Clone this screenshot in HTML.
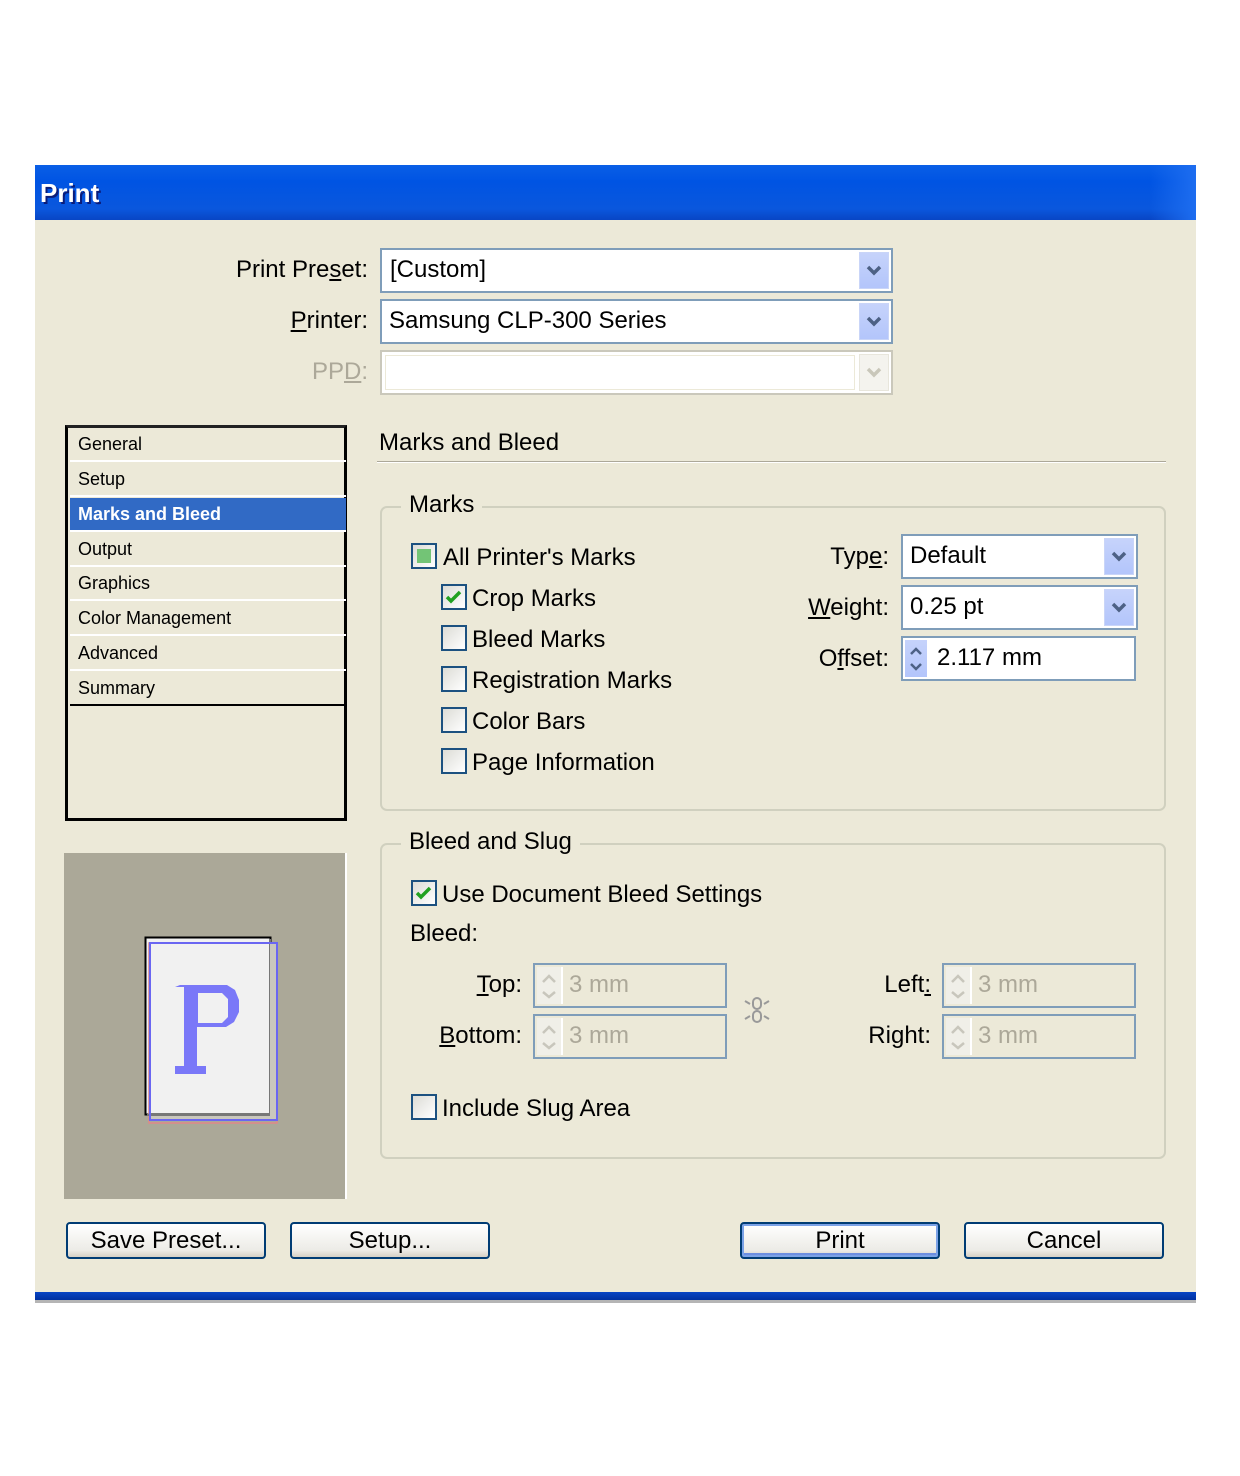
<!DOCTYPE html>
<html><head><meta charset="utf-8"><style>
*{margin:0;padding:0;box-sizing:border-box}
body{width:1240px;height:1476px;background:#fff;position:relative;overflow:hidden;font-family:"Liberation Sans",sans-serif;color:#000}
.a{position:absolute}
.t{position:absolute;font-size:24px;line-height:30px;white-space:nowrap}
.r{text-align:right}
.box{position:absolute;background:#fff;border:2px solid #7f9db9}
.dd{position:absolute;top:2px;right:2px;width:30px;background:linear-gradient(#c6d3fb,#b3c5fb);border:1px solid #c9d5f8}
.dd svg{position:absolute;left:6px}
.cb{position:absolute;width:26px;height:26px;border:2px solid #1c5180;background:linear-gradient(135deg,#dcdcd6,#fff)}
.grp{position:absolute;border:2px solid #d0d0bf;border-radius:7px}
.leg{position:absolute;background:#ece9d8;padding:0 8px;font-size:24px;line-height:30px}
.li{position:absolute;left:2px;width:276px;height:34px;border-bottom:2px solid #fff;font-size:18px;line-height:32px;padding-left:8px}
.btn{position:absolute;top:1222px;height:37px;width:200px;border:2px solid #003c74;border-radius:4px;background:linear-gradient(#fff,#ecebe6 80%,#d6d0c5);text-align:center;font-size:24px;line-height:33px}
.spin{position:absolute;border:2px solid #7f9db9;background:#ece9d8}
.sp{position:absolute;left:2px;top:2px;width:26px;bottom:2px;background:#f0efe8;border-right:2px solid #fff}
.g{color:#aca899}
</style></head><body>
<!-- dialog -->
<div class="a" style="left:35px;top:165px;width:1161px;height:1138px;background:#ece9d8"></div>
<div class="a" style="left:35px;top:165px;width:1161px;height:55px;background:linear-gradient(#0a5fe6,#0054e3 30%,#0a57dd 80%,#0845c4);"></div>
<div class="a" style="left:1150px;top:165px;width:46px;height:55px;background:linear-gradient(90deg,rgba(0,84,227,0),#1d6df0)"></div>
<div class="t" style="left:40px;top:178px;color:#fff;font-weight:bold;font-size:26px;text-shadow:2px 2px 0 #0a1c7a">Print</div>
<div class="a" style="left:35px;top:1292px;width:1161px;height:8px;background:linear-gradient(#0845c4,#0030a0)"></div>
<div class="a" style="left:35px;top:1300px;width:1161px;height:3px;background:#b5b5b5"></div>

<!-- top fields -->
<div class="t r" style="left:150px;width:218px;top:255px">Print Pre<u>s</u>et:</div>
<div class="t r" style="left:150px;width:218px;top:306px"><u>P</u>rinter:</div>
<div class="t r g" style="left:150px;width:218px;top:357px">PP<u>D</u>:</div>
<div class="box" style="left:380px;top:248px;width:513px;height:45px"><div class="t" style="left:8px;top:5px">[Custom]</div><div class="dd" style="height:37px"><svg width="16" height="12" style="top:12px"><path d="M2 2l6 6 6-6" stroke="#4d6185" stroke-width="3.5" fill="none"/></svg></div></div>
<div class="box" style="left:380px;top:299px;width:513px;height:45px"><div class="t" style="left:7px;top:5px">Samsung CLP-300 Series</div><div class="dd" style="height:37px"><svg width="16" height="12" style="top:12px"><path d="M2 2l6 6 6-6" stroke="#4d6185" stroke-width="3.5" fill="none"/></svg></div></div>
<div class="box" style="left:380px;top:350px;width:513px;height:45px;border-color:#cac8bb"><div class="a" style="left:3px;top:3px;width:470px;height:35px;border:1px solid #ece9d8"></div><div class="dd" style="height:37px;background:#f4f3ee;border-color:#e8e6dc"><svg width="16" height="12" style="top:12px"><path d="M2 2l6 6 6-6" stroke="#c9c7ba" stroke-width="3.5" fill="none"/></svg></div></div>

<!-- list -->
<div class="a" style="left:65px;top:425px;width:282px;height:396px;border:3px solid #000;border-top-color:#222;background:#ece9d8">
<div class="li" style="top:0">General</div>
<div class="li" style="top:35px">Setup</div>
<div class="li" style="top:70px;background:#316ac5;color:#fff;font-weight:bold">Marks and Bleed</div>
<div class="li" style="top:105px">Output</div>
<div class="li" style="top:139px">Graphics</div>
<div class="li" style="top:174px">Color Management</div>
<div class="li" style="top:209px">Advanced</div>
<div class="li" style="top:244px;border-bottom:2px solid #000">Summary</div>
</div>

<!-- preview -->
<div class="a" style="left:64px;top:853px;width:283px;height:346px;background:#aba898;border-right:2px solid #fff"></div>
<svg class="a" style="left:140px;top:935px" width="145" height="195">
<rect x="5.5" y="2.5" width="125" height="177" fill="#f1f1f1" stroke="#000" stroke-width="2"/>
<rect x="9" y="8" width="128" height="180" fill="none" stroke="#e08888" stroke-width="1.5"/>
<line x1="130" y1="4" x2="130" y2="180" stroke="#777" stroke-width="2"/><line x1="7" y1="180" x2="131" y2="180" stroke="#777" stroke-width="2"/>
<rect x="130" y="8" width="6" height="176" fill="#c9c7bd"/><rect x="10" y="181" width="124" height="4" fill="#c9c7bd"/>
<rect x="10" y="8" width="127" height="177" fill="none" stroke="#6a66f2" stroke-width="2"/>
<path d="M40 50h47l8 5 4 10v12l-5 10-8 5h-29v39h9v8h-31v-8h9v-79h-9z M58 58v30h24l6-6v-18l-6-6z" fill="#7a78f8" fill-rule="evenodd"/>
</svg>

<!-- Marks and Bleed heading -->
<div class="t" style="left:379px;top:428px">Marks and Bleed</div>
<div class="a" style="left:377px;top:461px;width:789px;height:2px;background:#aca899;border-bottom:1px solid #fff"></div>

<!-- Marks group -->
<div class="grp" style="left:380px;top:506px;width:786px;height:305px"></div>
<div class="leg" style="left:401px;top:490px">Marks</div>
<div class="cb" style="left:411px;top:543px"><div class="a" style="left:4px;top:4px;width:14px;height:14px;background:#73c476"></div></div>
<div class="t" style="left:443px;top:543px">All Printer's Marks</div>
<div class="cb" style="left:441px;top:584px"><svg class="a" style="left:2px;top:3px" width="18" height="16"><path d="M2 8l4 4 9-9" stroke="#21a121" stroke-width="3.5" fill="none"/></svg></div>
<div class="t" style="left:472px;top:584px">Crop Marks</div>
<div class="cb" style="left:441px;top:625px"></div><div class="t" style="left:472px;top:625px">Bleed Marks</div>
<div class="cb" style="left:441px;top:666px"></div><div class="t" style="left:472px;top:666px">Registration Marks</div>
<div class="cb" style="left:441px;top:707px"></div><div class="t" style="left:472px;top:707px">Color Bars</div>
<div class="cb" style="left:441px;top:748px"></div><div class="t" style="left:472px;top:748px">Page Information</div>

<div class="t r" style="left:760px;width:129px;top:542px">Typ<u>e</u>:</div>
<div class="t r" style="left:760px;width:129px;top:593px"><u>W</u>eight:</div>
<div class="t r" style="left:760px;width:129px;top:644px">O<u>f</u>fset:</div>
<div class="box" style="left:901px;top:534px;width:237px;height:45px"><div class="t" style="left:7px;top:5px">Default</div><div class="dd" style="height:37px"><svg width="16" height="12" style="top:12px"><path d="M2 2l6 6 6-6" stroke="#4d6185" stroke-width="3.5" fill="none"/></svg></div></div>
<div class="box" style="left:901px;top:585px;width:237px;height:45px"><div class="t" style="left:7px;top:5px">0.25 pt</div><div class="dd" style="height:37px"><svg width="16" height="12" style="top:12px"><path d="M2 2l6 6 6-6" stroke="#4d6185" stroke-width="3.5" fill="none"/></svg></div></div>
<div class="box" style="left:901px;top:636px;width:235px;height:45px"><div class="a" style="left:2px;top:2px;width:22px;height:37px;background:linear-gradient(#c6d3fb,#b3c5fb)"><svg width="22" height="37"><path d="M6 14l5-5 5 5M6 24l5 5 5-5" stroke="#4d6185" stroke-width="2.5" fill="none"/></svg></div><div class="t" style="left:34px;top:5px">2.117 mm</div></div>

<!-- Bleed group -->
<div class="grp" style="left:380px;top:843px;width:786px;height:316px"></div>
<div class="leg" style="left:401px;top:827px">Bleed and Slug</div>
<div class="cb" style="left:411px;top:880px"><svg class="a" style="left:2px;top:3px" width="18" height="16"><path d="M2 8l4 4 9-9" stroke="#21a121" stroke-width="3.5" fill="none"/></svg></div>
<div class="t" style="left:442px;top:880px">Use Document Bleed Settings</div>
<div class="t" style="left:410px;top:919px">Bleed:</div>
<div class="t r" style="left:400px;width:122px;top:970px"><u>T</u>op:</div>
<div class="t r" style="left:400px;width:122px;top:1021px"><u>B</u>ottom:</div>
<div class="t r" style="left:800px;width:131px;top:970px">Left<u>:</u></div>
<div class="t r" style="left:800px;width:131px;top:1021px">Ri<u>g</u>ht:</div>
<div class="spin" style="left:533px;top:963px;width:194px;height:45px"><div class="sp"><svg width="24" height="37"><path d="M6 15l6-6 6 6M6 25l6 5 6-5" stroke="#c8c6bc" stroke-width="2.5" fill="none"/></svg></div><div class="t g" style="left:34px;top:5px">3 mm</div></div>
<div class="spin" style="left:533px;top:1014px;width:194px;height:45px"><div class="sp"><svg width="24" height="37"><path d="M6 15l6-6 6 6M6 25l6 5 6-5" stroke="#c8c6bc" stroke-width="2.5" fill="none"/></svg></div><div class="t g" style="left:34px;top:5px">3 mm</div></div>
<div class="spin" style="left:942px;top:963px;width:194px;height:45px"><div class="sp"><svg width="24" height="37"><path d="M6 15l6-6 6 6M6 25l6 5 6-5" stroke="#c8c6bc" stroke-width="2.5" fill="none"/></svg></div><div class="t g" style="left:34px;top:5px">3 mm</div></div>
<div class="spin" style="left:942px;top:1014px;width:194px;height:45px"><div class="sp"><svg width="24" height="37"><path d="M6 15l6-6 6 6M6 25l6 5 6-5" stroke="#c8c6bc" stroke-width="2.5" fill="none"/></svg></div><div class="t g" style="left:34px;top:5px">3 mm</div></div>
<svg class="a" style="left:743px;top:995px" width="28" height="30"><g stroke="#999" stroke-width="2" fill="none"><rect x="10" y="3" width="8" height="11" rx="4"/><rect x="10" y="16" width="8" height="11" rx="4"/><path d="M2 6l5 3M26 6l-5 3M2 24l5-3M26 24l-5-3"/></g></svg>
<div class="cb" style="left:411px;top:1094px"></div>
<div class="t" style="left:442px;top:1094px">Include Slug Area</div>

<!-- buttons -->
<div class="btn" style="left:66px">Save Preset...</div>
<div class="btn" style="left:290px">Setup...</div>
<div class="btn" style="left:740px;box-shadow:inset 0 0 0 2px #7ba2e7,inset 0 -2px 0 2px #6d8ee0">Print</div>
<div class="btn" style="left:964px">Cancel</div>
</body></html>
